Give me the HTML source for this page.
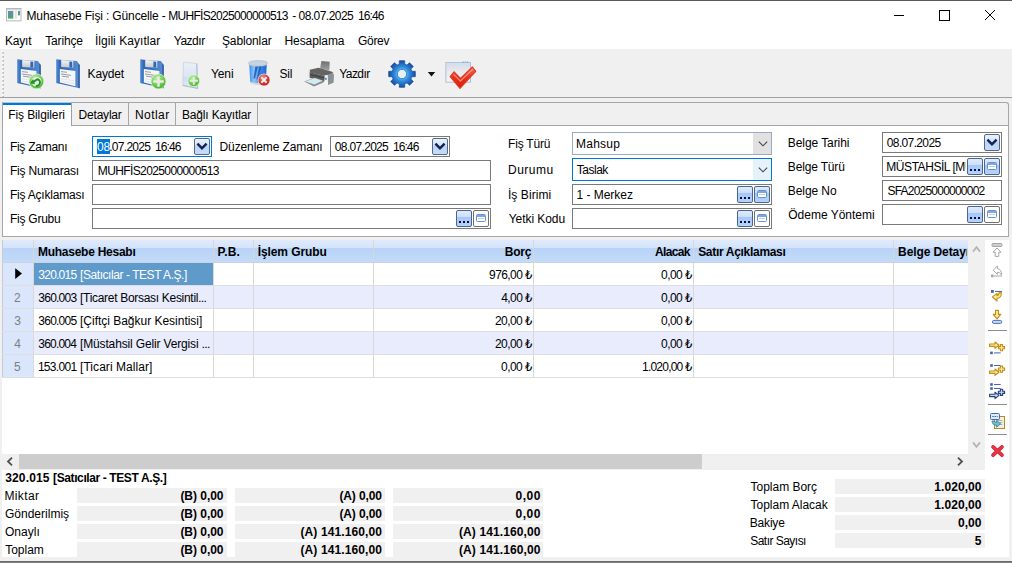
<!DOCTYPE html>
<html lang="tr">
<head>
<meta charset="utf-8">
<title>Muhasebe Fişi : Güncelle</title>
<style>
html,body{margin:0;padding:0;background:#f0f0f0;}
body{width:1012px;height:563px;overflow:hidden;font-family:"Liberation Sans","DejaVu Sans",sans-serif;font-size:12px;color:#000;}
#win{position:relative;width:1012px;height:563px;overflow:hidden;background:#f0f0f0;}
#win div,#win svg{position:absolute;box-sizing:border-box;}
.t{white-space:nowrap;line-height:14px;height:14px;font-size:12px;}
.b{font-weight:bold;}
.white{background:#fff;}
.fld{background:#fff;border:1px solid #7a7a7a;}
.fld.foc{border-color:#0078d7;}
.cmb{background:#fff;border:1px solid #97abc3;}
.cmb.foc{border-color:#0078d7;}
.ddb{border:1px solid #566884;border-radius:2px;background:linear-gradient(#e8f1fd 0%,#d6e6fb 42%,#b9d4f8 46%,#c6dcfa 100%);}
.eb{border:1px solid #4a6590;border-radius:2px;background:linear-gradient(#dfebfd 0%,#cfe0fa 36%,#a6c8f6 42%,#b6d3f9 100%);}
.eb2{border:1px solid #707070;border-radius:2px;background:#fff;}
.gbox{background:#f0f0f0;}
.hl{background:#0078d7;}
.vsep{background:#d8d8d8;width:1px;}
.hsep{background:#dedede;height:1px;}
.l{font-size:11.5px;}
.e{font-size:8.5px;font-weight:bold;}

</style>
</head>
<body>
<div id="win">
<!-- title bar -->
<div class="white" style="left:0;top:0;width:1012px;height:49px;border-top:1px solid #5a5a5a"></div>
<svg style="left:6px;top:8px" width="16" height="14" viewBox="0 0 16 14"><defs><linearGradient id="gApp" x1="0" y1="0" x2="0" y2="1"><stop offset="0" stop-color="#6888bc"/><stop offset="1" stop-color="#46aa5c"/></linearGradient></defs><rect x="0.5" y="0.5" width="14.5" height="12.4" fill="#fdfdfd" stroke="#b4b8bd"/><rect x="1" y="1" width="13.5" height="1.4" fill="#d4d8dc"/><rect x="1.9" y="3" width="5.4" height="7.6" fill="url(#gApp)"/><rect x="8.8" y="3" width="2" height="7.6" fill="#e2e2e2"/><rect x="12" y="3" width="2" height="4.4" fill="url(#gApp)"/></svg>
<svg style="left:890px;top:5px" width="110" height="20" viewBox="0 0 110 20" fill="none" stroke="#000" stroke-width="1"><path d="M4 10.5H14"/><rect x="49.5" y="5.5" width="10" height="10"/><path d="M95 5L105 15M105 5L95 15"/></svg>
<!-- toolbar -->
<div style="left:0;top:97px;width:1012px;height:1px;background:#a0a0a0"></div>
<!-- tab control -->
<div style="left:2px;top:102px;width:1007px;height:24px;border:1px solid #a6a6a6;border-bottom:none;border-radius:0 3px 0 0;background:#f0f0f0"></div>
<div class="white" style="left:2px;top:125px;width:1007px;height:112px;border:1px solid #a6a6a6"></div>
<div style="left:128px;top:103px;width:1px;height:22px;background:#a6a6a6"></div>
<div style="left:175px;top:103px;width:1px;height:22px;background:#a6a6a6"></div>
<div style="left:257px;top:103px;width:1px;height:22px;background:#a6a6a6"></div>
<div class="white" style="left:2px;top:102px;width:70px;height:24px;border:1px solid #a0a0a0;border-bottom:none;border-top:1px solid #b8c4d4;border-radius:2px 0 0 0"></div>
<div style="left:3px;top:103px;width:68px;height:2px;background:#0078d7"></div>
<!-- left fields -->
<div class="fld foc" style="left:92px;top:136px;width:120px;height:21px"></div>
<div class="hl" style="left:97px;top:139px;width:13px;height:15px"></div>
<div class="ddb" style="left:194px;top:138px;width:16px;height:17px"></div>
<div class="fld" style="left:330px;top:136px;width:120px;height:21px"></div>
<div class="ddb" style="left:432px;top:138px;width:16px;height:17px"></div>
<div class="fld" style="left:92px;top:160px;width:399px;height:21px"></div>
<div class="fld" style="left:92px;top:184px;width:399px;height:21px"></div>
<div class="fld" style="left:92px;top:208px;width:399px;height:21px"></div>
<!-- middle fields -->
<div class="cmb" style="left:572px;top:132px;width:200px;height:23px"></div>
<div style="left:753px;top:133px;width:18px;height:21px;background:#e1e1e1"></div>
<div class="cmb foc" style="left:572px;top:158px;width:200px;height:23px"></div>
<div style="left:753px;top:159px;width:18px;height:21px;background:#e5f1fb"></div>
<div class="fld" style="left:572px;top:184px;width:200px;height:21px"></div>
<div class="fld" style="left:572px;top:208px;width:200px;height:21px"></div>
<!-- right fields -->
<div class="fld" style="left:882px;top:132px;width:120px;height:21px"></div>
<div class="ddb" style="left:984px;top:134px;width:16px;height:17px"></div>
<div class="fld" style="left:882px;top:156px;width:120px;height:21px"></div>
<div class="fld" style="left:882px;top:180px;width:120px;height:21px"></div>
<div class="fld" style="left:882px;top:204px;width:120px;height:21px"></div>
<!-- grid -->
<div class="white" style="left:2px;top:240px;width:966px;height:214px"></div>
<div style="left:2px;top:240px;width:966px;height:23px;background:linear-gradient(#dfeafc 0,#d3e3fb 8px,#b8d3f7 8px,#c4dbf9 23px)"></div>
<div style="left:2px;top:263px;width:31px;height:115px;background:#d9e6fb"></div>
<div style="left:2px;top:240px;width:1px;height:138px;background:#c4ccd8"></div>
<div style="left:33px;top:285px;width:935px;height:23px;background:#e8ecfd"></div>
<div style="left:33px;top:331px;width:935px;height:23px;background:#e8ecfd"></div>
<div style="left:34px;top:263px;width:180px;height:22px;background:#5e9aca"></div>
<!-- scrollbars -->
<div style="left:968px;top:240px;width:17px;height:213px;background:#f0f0f0"></div>
<div style="left:2px;top:454px;width:983px;height:16px;background:#f0f0f0"></div>
<div style="left:19px;top:454px;width:683px;height:15px;background:#cdcdcd"></div>
<!-- footer -->
<div class="white" style="left:2px;top:470px;width:1007px;height:87px"></div>
<div class="gbox" style="left:77px;top:488px;width:150px;height:15px"></div>
<div class="gbox" style="left:235px;top:488px;width:150px;height:15px"></div>
<div class="gbox" style="left:393px;top:488px;width:150px;height:15px"></div>
<div class="gbox" style="left:77px;top:506px;width:150px;height:15px"></div>
<div class="gbox" style="left:235px;top:506px;width:150px;height:15px"></div>
<div class="gbox" style="left:393px;top:506px;width:150px;height:15px"></div>
<div class="gbox" style="left:77px;top:524px;width:150px;height:15px"></div>
<div class="gbox" style="left:235px;top:524px;width:150px;height:15px"></div>
<div class="gbox" style="left:393px;top:524px;width:150px;height:15px"></div>
<div class="gbox" style="left:77px;top:542px;width:150px;height:15px"></div>
<div class="gbox" style="left:235px;top:542px;width:150px;height:15px"></div>
<div class="gbox" style="left:393px;top:542px;width:150px;height:15px"></div>
<div class="gbox" style="left:835px;top:479px;width:150px;height:15px"></div>
<div class="gbox" style="left:835px;top:497px;width:150px;height:15px"></div>
<div class="gbox" style="left:835px;top:515px;width:150px;height:15px"></div>
<div class="gbox" style="left:835px;top:533px;width:150px;height:15px"></div>
<div class="vsep" style="left:33px;top:240px;height:138px"></div>
<div class="vsep" style="left:213px;top:240px;height:138px"></div>
<div class="vsep" style="left:253px;top:240px;height:138px"></div>
<div class="vsep" style="left:373px;top:240px;height:138px"></div>
<div class="vsep" style="left:533px;top:240px;height:138px"></div>
<div class="vsep" style="left:693px;top:240px;height:138px"></div>
<div class="vsep" style="left:893px;top:240px;height:138px"></div>
<div class="hsep" style="left:2px;top:262px;width:966px;background:#c9d3e0"></div>
<div class="hsep" style="left:2px;top:285px;width:966px"></div>
<div class="hsep" style="left:2px;top:308px;width:966px"></div>
<div class="hsep" style="left:2px;top:331px;width:966px"></div>
<div class="hsep" style="left:2px;top:354px;width:966px"></div>
<div class="hsep" style="left:2px;top:377px;width:966px"></div>
<svg style="left:0;top:0" width="0" height="0"><defs>
<linearGradient id="gFl" x1="0" y1="0" x2="1" y2="0"><stop offset="0" stop-color="#2e64b2"/><stop offset="0.5" stop-color="#3a72c0"/><stop offset="1" stop-color="#5a90d6"/></linearGradient>
<linearGradient id="gSh" x1="0" y1="0" x2="0" y2="1"><stop offset="0" stop-color="#f4f4f4"/><stop offset="1" stop-color="#c4c8cc"/></linearGradient>
<radialGradient id="gGr" cx="0.4" cy="0.3" r="0.8"><stop offset="0" stop-color="#c2eeac"/><stop offset="0.6" stop-color="#66ca46"/><stop offset="1" stop-color="#3aa62c"/></radialGradient>
<radialGradient id="gRd" cx="0.4" cy="0.3" r="0.8"><stop offset="0" stop-color="#f58a8a"/><stop offset="0.55" stop-color="#dd2f2f"/><stop offset="1" stop-color="#b01010"/></radialGradient>
<linearGradient id="gBin" x1="0" y1="0" x2="1" y2="0"><stop offset="0" stop-color="#3c8ee8"/><stop offset="0.28" stop-color="#8ccaf8"/><stop offset="0.6" stop-color="#3a8ae6"/><stop offset="1" stop-color="#2468d2"/></linearGradient>
<radialGradient id="gGear" cx="0.5" cy="0.5" r="0.5"><stop offset="0.3" stop-color="#5cc4f4"/><stop offset="0.55" stop-color="#2f8ade"/><stop offset="1" stop-color="#174c9e"/></radialGradient>
<linearGradient id="gChk" x1="0" y1="0" x2="0" y2="1"><stop offset="0" stop-color="#f4705a"/><stop offset="0.5" stop-color="#e8301c"/><stop offset="1" stop-color="#d81c0c"/></linearGradient>
<linearGradient id="gPr" x1="0" y1="0" x2="0" y2="1"><stop offset="0" stop-color="#707070"/><stop offset="1" stop-color="#a0a0a0"/></linearGradient>
<linearGradient id="gDoc" x1="0" y1="0" x2="0" y2="1"><stop offset="0" stop-color="#e9f0f8"/><stop offset="0.55" stop-color="#dbe6f3"/><stop offset="0.56" stop-color="#cfdcec"/><stop offset="1" stop-color="#e3ebf5"/></linearGradient>
<linearGradient id="gWin" x1="0" y1="0" x2="0" y2="1"><stop offset="0" stop-color="#d9dde3"/><stop offset="1" stop-color="#f6f7f9"/></linearGradient>
</defs></svg>
<svg style="left:1px;top:50.6px" width="4" height="47" viewBox="0 0 4 47"><rect x="0.4" y="0.2" width="1.6" height="1.6" fill="#fff"/><rect x="1.4" y="1" width="1.5" height="1.5" fill="#b0b0b0"/><rect x="0.4" y="4.2" width="1.6" height="1.6" fill="#fff"/><rect x="1.4" y="5" width="1.5" height="1.5" fill="#b0b0b0"/><rect x="0.4" y="8.2" width="1.6" height="1.6" fill="#fff"/><rect x="1.4" y="9" width="1.5" height="1.5" fill="#b0b0b0"/><rect x="0.4" y="12.2" width="1.6" height="1.6" fill="#fff"/><rect x="1.4" y="13" width="1.5" height="1.5" fill="#b0b0b0"/><rect x="0.4" y="16.2" width="1.6" height="1.6" fill="#fff"/><rect x="1.4" y="17" width="1.5" height="1.5" fill="#b0b0b0"/><rect x="0.4" y="20.2" width="1.6" height="1.6" fill="#fff"/><rect x="1.4" y="21" width="1.5" height="1.5" fill="#b0b0b0"/><rect x="0.4" y="24.2" width="1.6" height="1.6" fill="#fff"/><rect x="1.4" y="25" width="1.5" height="1.5" fill="#b0b0b0"/><rect x="0.4" y="28.2" width="1.6" height="1.6" fill="#fff"/><rect x="1.4" y="29" width="1.5" height="1.5" fill="#b0b0b0"/><rect x="0.4" y="32.2" width="1.6" height="1.6" fill="#fff"/><rect x="1.4" y="33" width="1.5" height="1.5" fill="#b0b0b0"/><rect x="0.4" y="36.2" width="1.6" height="1.6" fill="#fff"/><rect x="1.4" y="37" width="1.5" height="1.5" fill="#b0b0b0"/><rect x="0.4" y="40.2" width="1.6" height="1.6" fill="#fff"/><rect x="1.4" y="41" width="1.5" height="1.5" fill="#b0b0b0"/><rect x="0.4" y="44.2" width="1.6" height="1.6" fill="#fff"/><rect x="1.4" y="45" width="1.5" height="1.5" fill="#b0b0b0"/></svg>
<svg style="left:17px;top:58.8px" width="26" height="31" viewBox="0 0 26 31"><path d="M0.5 0.5 L20.9 2 L23.7 5.9 L23.7 29.3 L0.5 24 Z" fill="url(#gFl)"/><path d="M22.3 4.2 L23.7 5.9 L23.7 29.3 L22.3 29 Z" fill="#2c569c"/><path d="M0.5 0.5 L2.6 0.7 L2.6 24.5 L0.5 24 Z" fill="#4a8ad8" opacity="0.8"/><path d="M5.2 0.9 L17.3 1.8 L17.3 8.7 L5.2 8 Z" fill="url(#gSh)"/><path d="M13.4 2.6 L16.2 2.8 L16.2 8.6 L13.4 8.4 Z" fill="#3565ae"/><path d="M3.8 10.1 L19.4 11.9 L19.4 27.2 L3.8 23.6 Z" fill="#f4f6f8"/><path d="M5 12.6 L11 13.3 M5 15 L15 16.4 M6 17.2 L13 18.2" stroke="#8c9096" stroke-width="0.9" fill="none"/><path d="M5 19.8 L18 21.8 M5 22 L18 24.6" stroke="#dde1e6" stroke-width="0.8" fill="none"/></svg>
<svg style="left:28.2px;top:73.2px" width="16.8" height="16.8" viewBox="0 0 16.8 16.8"><circle cx="8.4" cy="8.4" r="7.4" fill="url(#gGr)" stroke="#e8f4e4" stroke-opacity="0.9" stroke-width="0.8"/><circle cx="8.6" cy="8.8" r="4.884" fill="#f2faee" opacity="0.92"/><path d="M7.8 12.8 A3.2 3.2 0 0 0 9.4 6.2 L5.4 8.8" stroke="#22902a" stroke-width="2" fill="none"/><path d="M2.1 10.3 L5 6 L7 11.2 Z" fill="#22902a"/></svg>
<svg style="left:55.8px;top:58.8px" width="26" height="31" viewBox="0 0 26 31"><path d="M0.5 0.5 L20.9 2 L23.7 5.9 L23.7 29.3 L0.5 24 Z" fill="url(#gFl)"/><path d="M22.3 4.2 L23.7 5.9 L23.7 29.3 L22.3 29 Z" fill="#2c569c"/><path d="M0.5 0.5 L2.6 0.7 L2.6 24.5 L0.5 24 Z" fill="#4a8ad8" opacity="0.8"/><path d="M5.2 0.9 L17.3 1.8 L17.3 8.7 L5.2 8 Z" fill="url(#gSh)"/><path d="M13.4 2.6 L16.2 2.8 L16.2 8.6 L13.4 8.4 Z" fill="#3565ae"/><path d="M3.8 10.1 L19.4 11.9 L19.4 27.2 L3.8 23.6 Z" fill="#f4f6f8"/><path d="M5 12.6 L11 13.3 M5 15 L15 16.4 M6 17.2 L13 18.2" stroke="#8c9096" stroke-width="0.9" fill="none"/><path d="M5 19.8 L18 21.8 M5 22 L18 24.6" stroke="#dde1e6" stroke-width="0.8" fill="none"/></svg>
<svg style="left:139.8px;top:58.8px" width="26" height="31" viewBox="0 0 26 31"><path d="M0.5 0.5 L20.9 2 L23.7 5.9 L23.7 29.3 L0.5 24 Z" fill="url(#gFl)"/><path d="M22.3 4.2 L23.7 5.9 L23.7 29.3 L22.3 29 Z" fill="#2c569c"/><path d="M0.5 0.5 L2.6 0.7 L2.6 24.5 L0.5 24 Z" fill="#4a8ad8" opacity="0.8"/><path d="M5.2 0.9 L17.3 1.8 L17.3 8.7 L5.2 8 Z" fill="url(#gSh)"/><path d="M13.4 2.6 L16.2 2.8 L16.2 8.6 L13.4 8.4 Z" fill="#3565ae"/><path d="M3.8 10.1 L19.4 11.9 L19.4 27.2 L3.8 23.6 Z" fill="#f4f6f8"/><path d="M5 12.6 L11 13.3 M5 15 L15 16.4 M6 17.2 L13 18.2" stroke="#8c9096" stroke-width="0.9" fill="none"/><path d="M5 19.8 L18 21.8 M5 22 L18 24.6" stroke="#dde1e6" stroke-width="0.8" fill="none"/></svg>
<svg style="left:150.4px;top:72.8px" width="17" height="17" viewBox="0 0 17 17"><circle cx="8.5" cy="8.5" r="7.5" fill="url(#gGr)" stroke="#e8f4e4" stroke-opacity="0.9" stroke-width="0.8"/><path d="M3.25 8.5 H13.75 M8.5 3.25 V13.75" stroke="#e9ebe9" stroke-width="2.4" fill="none"/></svg>
<svg style="left:181.6px;top:61.4px" width="18" height="29" viewBox="0 0 18 29"><path d="M1.6 1 L14.8 2.6 L15.6 27.4 L0.8 24.4 Z" fill="url(#gDoc)" stroke="#c3cfdd" stroke-width="0.7"/><path d="M14.8 2.6 L15.6 27.4 L0.8 24.4" fill="none" stroke="#a9bbd2" stroke-width="1"/></svg>
<svg style="left:186.9px;top:73.7px" width="13.6" height="13.6" viewBox="0 0 13.6 13.6"><circle cx="6.8" cy="6.8" r="5.8" fill="url(#gGr)" stroke="#e8f4e4" stroke-opacity="0.9" stroke-width="0.8"/><path d="M2.74 6.8 H10.86 M6.8 2.74 V10.86" stroke="#e9ebe9" stroke-width="1.856" fill="none"/></svg>
<svg style="left:247.9px;top:60.4px" width="20.5" height="27" viewBox="0 0 20.5 27"><path d="M1.2 3.4 L2.2 22.8 Q10 26 17.8 22.8 L18.8 3.4 Z" fill="url(#gBin)"/><path d="M7.4 6.4 L9.8 6.4 L7 18.4 L5.4 18.4 Z M11.6 6.4 L13.2 6.4 L9.8 19.6 L8.6 19.6 Z" fill="#1546b0" opacity="0.75"/><ellipse cx="10" cy="3.2" rx="9.2" ry="2.4" fill="#c4d6e4" stroke="#c6cbd0" stroke-width="1.4"/><path d="M2.3 22.2 Q10 25.8 17.7 22.2" stroke="#d4d8dc" stroke-width="1.8" fill="none"/></svg>
<svg style="left:257.2px;top:73.3px" width="14" height="14" viewBox="0 0 14 14"><circle cx="7" cy="7" r="6" fill="url(#gRd)" stroke="#e8f4e4" stroke-opacity="0.9" stroke-width="0.8"/><path d="M4.3 4.3 L9.7 9.7 M9.7 4.3 L4.3 9.7" stroke="#eee" stroke-width="2.16" fill="none"/></svg>
<svg style="left:304px;top:61px" width="31" height="26" viewBox="0 0 31 26"><path d="M17.4 0.1 L25.7 0.8 L25.4 9.4 L16.1 7.5 Z" fill="url(#gPr)"/><path d="M5.6 8.7 L14.5 6.8 L28 10.7 L29.4 12 L21.6 15 L5.6 11.4 Z" fill="#646464"/><path d="M3.3 9.6 L5.6 8.7 L5.6 16.8 L3.3 16.2 Z" fill="#ececec"/><path d="M5.6 11.3 L21.4 15 L20.4 20.8 L5.6 16.8 Z" fill="#5c5c5c"/><path d="M6.4 13 L20.4 16.2 L20.2 17.4 L6.4 14.2 Z" fill="#444"/><path d="M23.4 13.9 L28.9 11.9 Q30.2 13.4 30 15 L29.5 21.8 L24 23.9 Z" fill="#8c9292"/><path d="M20.6 14.6 L23.5 13.8 L24 23.8 L20.6 23.2 Z" fill="#f4f5f6"/><rect x="21.1" y="16.8" width="1.6" height="2" fill="#4a74d8"/><path d="M0.2 20.4 L10.7 16.7 L19.4 19.6 L19.4 21.6 L10 25.4 Z" fill="#8a8a8a"/><path d="M10.7 16.9 L18.6 19.7 L10.4 23.6 L1.2 20.5 Z" fill="#d2eaf1"/></svg>
<svg style="left:387.7px;top:60.2px" width="28" height="28" viewBox="0 0 28 28"><path d="M11.23 4.18 L11.35 0.66 L16.65 0.66 L16.77 4.18 L18.98 5.10 L21.56 2.69 L25.31 6.44 L22.90 9.02 L23.82 11.23 L27.34 11.35 L27.34 16.65 L23.82 16.77 L22.90 18.98 L25.31 21.56 L21.56 25.31 L18.98 22.90 L16.77 23.82 L16.65 27.34 L11.35 27.34 L11.23 23.82 L9.02 22.90 L6.44 25.31 L2.69 21.56 L5.10 18.98 L4.18 16.77 L0.66 16.65 L0.66 11.35 L4.18 11.23 L5.10 9.02 L2.69 6.44 L6.44 2.69 L9.02 5.10Z" fill="url(#gGear)" stroke="#1a4f9e" stroke-width="0.7" stroke-linejoin="round"/><circle cx="14" cy="14" r="4.7" fill="#e9eef2" stroke="#2a78c8" stroke-width="0.9"/></svg>
<svg style="left:427px;top:71px" width="9" height="6" viewBox="0 0 9 6"><path d="M0.8 1 L8.2 1 L4.5 5.4 Z" fill="#111"/></svg>
<svg style="left:444.5px;top:61px" width="32" height="29" viewBox="0 0 32 29"><rect x="0.9" y="1.6" width="24.6" height="19.6" fill="url(#gWin)" stroke="#aebfd8" stroke-width="1"/><rect x="1.4" y="2.1" width="23.6" height="2.6" fill="#d4dff0"/><path d="M17.5 1.2 H24" stroke="#8fa8cc" stroke-width="1.2" stroke-dasharray="1.4 0.8"/><path d="M5.2 15.7 L9.1 10.8 L15.5 17.4 L27.4 6 L30.7 10.3 L15 27.3 Z" fill="url(#gChk)" stroke="#e03a24" stroke-width="1.2" stroke-linejoin="round"/><path d="M8.6 13.4 L15.4 20 L28 8" stroke="#f9a898" stroke-width="1.3" fill="none" opacity="0.7"/></svg>
<svg style="left:194px;top:138px" width="16" height="17" viewBox="0 0 16 17"><path d="M3.4 5.6 L8 10.3 L12.6 5.6" stroke="#14224f" stroke-width="2.5" fill="none"/></svg>
<svg style="left:432px;top:138px" width="16" height="17" viewBox="0 0 16 17"><path d="M3.4 5.6 L8 10.3 L12.6 5.6" stroke="#14224f" stroke-width="2.5" fill="none"/></svg>
<svg style="left:984px;top:134px" width="16" height="17" viewBox="0 0 16 17"><path d="M3.4 5.6 L8 10.3 L12.6 5.6" stroke="#14224f" stroke-width="2.5" fill="none"/></svg>
<svg style="left:753px;top:132px" width="18" height="23" viewBox="0 0 18 23"><path d="M5.8 9.6 L10 13.8 L14.2 9.6" stroke="#444" stroke-width="1.1" fill="none"/></svg>
<svg style="left:753px;top:158px" width="18" height="23" viewBox="0 0 18 23"><path d="M5.8 9.6 L10 13.8 L14.2 9.6" stroke="#444" stroke-width="1.1" fill="none"/></svg>
<div class="eb" style="left:456px;top:210px;width:16px;height:17px"></div>
<svg style="left:456px;top:210px" width="16" height="17" viewBox="0 0 16 17"><rect x="3" y="11" width="2" height="2" fill="#0a0a4a"/><rect x="7" y="11" width="2" height="2" fill="#0a0a4a"/><rect x="11" y="11" width="2" height="2" fill="#0a0a4a"/></svg>
<div class="eb2" style="left:473px;top:210px;width:16px;height:17px"></div>
<svg style="left:473px;top:210px" width="16" height="17" viewBox="0 0 16 17"><rect x="3.5" y="4.5" width="9" height="7" rx="1" fill="#fff" stroke="#6492d8"/><rect x="4" y="5" width="8" height="2" fill="#7ea6e2"/><path d="M5.5 8.5H10.5" stroke="#9a9a9a" stroke-width="1" stroke-dasharray="1 1"/></svg>
<div class="eb" style="left:737px;top:186px;width:16px;height:17px"></div>
<svg style="left:737px;top:186px" width="16" height="17" viewBox="0 0 16 17"><rect x="3" y="11" width="2" height="2" fill="#0a0a4a"/><rect x="7" y="11" width="2" height="2" fill="#0a0a4a"/><rect x="11" y="11" width="2" height="2" fill="#0a0a4a"/></svg>
<div class="eb" style="left:754px;top:186px;width:16px;height:17px"></div>
<svg style="left:754px;top:186px" width="16" height="17" viewBox="0 0 16 17"><rect x="3.5" y="4.5" width="9" height="7" rx="1" fill="#fff" stroke="#6492d8"/><rect x="4" y="5" width="8" height="2" fill="#7ea6e2"/><path d="M5.5 8.5H10.5" stroke="#9a9a9a" stroke-width="1" stroke-dasharray="1 1"/></svg>
<div class="eb" style="left:737px;top:210px;width:16px;height:17px"></div>
<svg style="left:737px;top:210px" width="16" height="17" viewBox="0 0 16 17"><rect x="3" y="11" width="2" height="2" fill="#0a0a4a"/><rect x="7" y="11" width="2" height="2" fill="#0a0a4a"/><rect x="11" y="11" width="2" height="2" fill="#0a0a4a"/></svg>
<div class="eb2" style="left:754px;top:210px;width:16px;height:17px"></div>
<svg style="left:754px;top:210px" width="16" height="17" viewBox="0 0 16 17"><rect x="3.5" y="4.5" width="9" height="7" rx="1" fill="#fff" stroke="#6492d8"/><rect x="4" y="5" width="8" height="2" fill="#7ea6e2"/><path d="M5.5 8.5H10.5" stroke="#9a9a9a" stroke-width="1" stroke-dasharray="1 1"/></svg>
<div class="eb" style="left:967px;top:158px;width:16px;height:17px"></div>
<svg style="left:967px;top:158px" width="16" height="17" viewBox="0 0 16 17"><rect x="3" y="11" width="2" height="2" fill="#0a0a4a"/><rect x="7" y="11" width="2" height="2" fill="#0a0a4a"/><rect x="11" y="11" width="2" height="2" fill="#0a0a4a"/></svg>
<div class="eb" style="left:984px;top:158px;width:16px;height:17px"></div>
<svg style="left:984px;top:158px" width="16" height="17" viewBox="0 0 16 17"><rect x="3.5" y="4.5" width="9" height="7" rx="1" fill="#fff" stroke="#6492d8"/><rect x="4" y="5" width="8" height="2" fill="#7ea6e2"/><path d="M5.5 8.5H10.5" stroke="#9a9a9a" stroke-width="1" stroke-dasharray="1 1"/></svg>
<div class="eb" style="left:967px;top:206px;width:16px;height:17px"></div>
<svg style="left:967px;top:206px" width="16" height="17" viewBox="0 0 16 17"><rect x="3" y="11" width="2" height="2" fill="#0a0a4a"/><rect x="7" y="11" width="2" height="2" fill="#0a0a4a"/><rect x="11" y="11" width="2" height="2" fill="#0a0a4a"/></svg>
<div class="eb2" style="left:984px;top:206px;width:16px;height:17px"></div>
<svg style="left:984px;top:206px" width="16" height="17" viewBox="0 0 16 17"><rect x="3.5" y="4.5" width="9" height="7" rx="1" fill="#fff" stroke="#6492d8"/><rect x="4" y="5" width="8" height="2" fill="#7ea6e2"/><path d="M5.5 8.5H10.5" stroke="#9a9a9a" stroke-width="1" stroke-dasharray="1 1"/></svg>
<svg style="left:14px;top:267px" width="9" height="13" viewBox="0 0 9 13"><path d="M1.2 1.2 L8 6.6 L1.2 12 Z" fill="#000"/></svg>
<svg style="left:970px;top:244px" width="13" height="10" viewBox="0 0 13 10"><path d="M3 7.6 L6.5 3.2 L10 7.6" stroke="#b4b4b4" stroke-width="1.7" fill="none"/></svg>
<svg style="left:970px;top:440px" width="13" height="10" viewBox="0 0 13 10"><path d="M3 2.4 L6.5 6.8 L10 2.4" stroke="#b4b4b4" stroke-width="1.7" fill="none"/></svg>
<svg style="left:5px;top:456px" width="10" height="11" viewBox="0 0 10 11"><path d="M7 1.6 L3 5.5 L7 9.4" stroke="#505050" stroke-width="1.8" fill="none"/></svg>
<svg style="left:955px;top:456px" width="10" height="11" viewBox="0 0 10 11"><path d="M3 1.6 L7 5.5 L3 9.4" stroke="#505050" stroke-width="1.8" fill="none"/></svg>
<div style="left:985px;top:240px;width:24px;height:231px;background:#fff"></div>
<div style="left:988px;top:330px;width:19px;height:1px;background:#8e8e8e"></div>
<div style="left:988px;top:404px;width:19px;height:1px;background:#8e8e8e"></div>
<div style="left:988px;top:434px;width:19px;height:1px;background:#8e8e8e"></div>
<svg style="left:989px;top:242px" width="16" height="16" viewBox="0 0 16 16"><rect x="3" y="1.5" width="10" height="3" rx="1" fill="#cfcfcf" stroke="#a6a6a6" stroke-width="1"/><path d="M8 6 L12 10.2 L9.8 10.2 L9.8 14.4 L6.2 14.4 L6.2 10.2 L4 10.2 Z" fill="#fff" stroke="#a6a6a6" stroke-width="1"/></svg>
<svg style="left:989px;top:264px" width="16" height="16" viewBox="0 0 16 16"><path d="M4.2 6.2 L8.4 2 L8.4 4.6 Q12.6 5.4 12.6 11 L10.2 8.4 L8.4 8.4 L8.4 10.4 Z" fill="#fff" stroke="#a6a6a6" stroke-width="1" stroke-linejoin="round"/><rect x="2" y="10.6" width="2.6" height="2.6" fill="#a6a6a6"/><path d="M5 12 H13" stroke="#a6a6a6" stroke-width="1"/></svg>
<svg style="left:989px;top:289px" width="16" height="16" viewBox="0 0 16 16"><rect x="2" y="1" width="2.8" height="2.8" fill="#3f66b0"/><path d="M6 2.4 H13" stroke="#3f66b0" stroke-width="1"/><path d="M12.2 3.4 Q12.8 9 8 9.4 L8 12 L3.3 7.9 L8 4.4 L8 6.6 Q10 6.4 10 3.8 Z" fill="#fbe6a0" stroke="#c48e10" stroke-width="1.1" stroke-linejoin="round"/></svg>
<svg style="left:989px;top:308px" width="16" height="17" viewBox="0 0 16 17"><path d="M6.5 2.4 H9.5 V6.4 H11.8 L8 10.8 L4.2 6.4 H6.5 Z" fill="#fbe6a0" stroke="#c48e10" stroke-width="1.1" stroke-linejoin="round"/><rect x="3.4" y="12.4" width="9.4" height="3" rx="1.4" fill="#c8d8f0" stroke="#4a70bc" stroke-width="1"/></svg>
<svg style="left:989px;top:341px" width="17" height="18" viewBox="0 0 17 18"><rect x="1.2" y="10.6" width="2.6" height="2.6" fill="#3f66b0"/><path d="M5 11.9 H11.6" stroke="#3f66b0" stroke-width="1"/><path d="M0.6 3 H6 V1 L10 4.2 L6 7.4 V5.4 H0.6 Z" fill="#fbe6a0" stroke="#c48e10" stroke-width="1.1" stroke-linejoin="round"/><path d="M11.4 3.6 H13.6 V5.6 H15.6 V7.8 H13.6 V9.8 H11.4 V7.8 H9.4 V5.6 H11.4 Z" fill="#fbe6a0" stroke="#c48e10" stroke-width="1.1" stroke-linejoin="round"/></svg>
<svg style="left:989px;top:363px" width="17" height="18" viewBox="0 0 17 18"><rect x="1.2" y="1.2" width="2.6" height="2.6" fill="#3f66b0"/><path d="M5 2.5 H11.6" stroke="#3f66b0" stroke-width="1"/><path d="M0.6 8 H6 V6 L10 9.2 L6 12.4 V10.4 H0.6 Z" fill="#fbe6a0" stroke="#c48e10" stroke-width="1.1" stroke-linejoin="round"/><path d="M11.4 3 H13.6 V5 H15.6 V7.2 H13.6 V9.2 H11.4 V7.2 H9.4 V5 H11.4 Z" fill="#fbe6a0" stroke="#c48e10" stroke-width="1.1" stroke-linejoin="round"/></svg>
<svg style="left:989px;top:382px" width="17" height="18" viewBox="0 0 17 18"><rect x="1.2" y="1.2" width="2.6" height="2.6" fill="#3f66b0"/><path d="M5 2.5 H11.6" stroke="#3f66b0" stroke-width="1"/><rect x="1.2" y="5.2" width="2.6" height="2.6" fill="#3f66b0"/><path d="M5 6.5 H11.6" stroke="#3f66b0" stroke-width="1"/><path d="M0.6 12.2 H6 V10.2 L10 13.4 L6 16.6 V14.6 H0.6 Z" fill="#c8d4ee" stroke="#27407c" stroke-width="1.1" stroke-linejoin="round"/><path d="M11.4 7.2 H13.6 V9.2 H15.6 V11.4 H13.6 V13.4 H11.4 V11.4 H9.4 V9.2 H11.4 Z" fill="#c8d4ee" stroke="#27407c" stroke-width="1.1" stroke-linejoin="round"/></svg>
<svg style="left:989px;top:412px" width="17" height="18" viewBox="0 0 17 18"><rect x="5.5" y="4.5" width="10" height="12" fill="#f4f0dc" stroke="#b08a2c"/><path d="M7.5 8.5H13.5 M7.5 10.5H13.5 M7.5 12.5H13.5" stroke="#a0a0a0" stroke-width="0.8"/><rect x="1.5" y="1.5" width="9" height="6" rx="1" fill="#dfeaf8" stroke="#3f6cb4"/><path d="M3.4 4.5H8.6" stroke="#2a4a8a" stroke-width="1.2" stroke-dasharray="1.2 1"/><path d="M3 9 Q3.4 13.4 7.6 13.2 L7.6 15.2 L11.6 11.8 L7.6 8.6 L7.6 10.4 Q5.6 10.6 5.4 9 Z" fill="#6cc0d8" stroke="#2c7c98" stroke-width="0.8" stroke-linejoin="round"/></svg>
<svg style="left:990px;top:444px" width="15" height="14" viewBox="0 0 15 14"><path d="M3 2.9 L12 11.1 M12 2.9 L3 11.1" stroke="#c41828" stroke-width="3.6" stroke-linecap="round" fill="none"/><path d="M3 2.9 L12 11.1 M12 2.9 L3 11.1" stroke="#ea3444" stroke-width="2.4" stroke-linecap="round" fill="none"/></svg>
<div style="left:0;top:561px;width:1012px;height:2px;background:linear-gradient(#5f5f5f,#8a8a8a)"></div>

<!-- text labels -->
<div class="t" style="top:9px;left:26.52px;letter-spacing:-0.137px">Muhasebe Fişi : Güncelle -</div>
<div class="t" style="top:9px;left:168.22px;letter-spacing:-0.692px">MUHFİS2025000000513</div>
<div class="t" style="top:9px;left:292.37px;letter-spacing:-0.55px">- 08.07.2025</div>
<div class="t" style="top:9px;left:358.09px;letter-spacing:-0.947px">16:46</div>
<div class="t" style="top:34px;left:5.12px;letter-spacing:-0.247px">Kayıt</div>
<div class="t" style="top:34px;left:45.23px;letter-spacing:-0.147px">Tarihçe</div>
<div class="t" style="top:34px;left:94.89px;letter-spacing:0.044px">İlgili Kayıtlar</div>
<div class="t" style="top:34px;left:173.74px;letter-spacing:-0.467px">Yazdır</div>
<div class="t" style="top:34px;left:221.96px;letter-spacing:-0.12px">Şablonlar</div>
<div class="t" style="top:34px;left:284.52px;letter-spacing:-0.09px">Hesaplama</div>
<div class="t" style="top:34px;left:357.9px;letter-spacing:-0.261px">Görev</div>
<div class="t" style="top:67px;left:87.62px;letter-spacing:-0.157px">Kaydet</div>
<div class="t" style="top:67px;left:210.94px;letter-spacing:-0.083px">Yeni</div>
<div class="t" style="top:67px;left:279.46px;letter-spacing:-0.198px">Sil</div>
<div class="t" style="top:67px;left:339.24px;letter-spacing:-0.567px">Yazdır</div>
<div class="t" style="top:108px;left:8.22px;letter-spacing:-0.102px">Fiş Bilgileri</div>
<div class="t" style="top:108px;left:78.62px;letter-spacing:-0.215px">Detaylar</div>
<div class="t" style="top:108px;left:135.02px;letter-spacing:0.434px">Notlar</div>
<div class="t" style="top:108px;left:182.02px;letter-spacing:-0.169px">Bağlı Kayıtlar</div>
<div class="t" style="top:140px;left:9.92px;letter-spacing:-0.265px">Fiş Zamanı</div>
<div class="t" style="top:164px;left:9.92px;letter-spacing:-0.202px">Fiş Numarası</div>
<div class="t" style="top:188px;left:9.92px;letter-spacing:-0.21px">Fiş Açıklaması</div>
<div class="t" style="top:212px;left:9.92px;letter-spacing:-0.238px">Fiş Grubu</div>
<div class="t" style="top:140px;left:219.52px;letter-spacing:-0.106px">Düzenleme Zamanı</div>
<div class="t" style="top:140px;left:109.2px;letter-spacing:-0.703px">.07.2025</div>
<div class="t" style="top:140px;left:154.99px;letter-spacing:-0.897px">16:46</div>
<div class="t" style="top:140px;left:97.03px;letter-spacing:-0.069px;color:#fff">08</div>
<div class="t" style="top:140px;left:334.83px;letter-spacing:-0.677px">08.07.2025</div>
<div class="t" style="top:140px;left:392.89px;letter-spacing:-0.897px">16:46</div>
<div class="t" style="top:164px;left:97.82px;letter-spacing:-0.614px">MUHFİS2025000000513</div>
<div class="t" style="top:137px;left:508.02px;letter-spacing:-0.193px">Fiş Türü</div>
<div class="t" style="top:163px;left:508.02px;letter-spacing:0.499px">Durumu</div>
<div class="t" style="top:188px;left:507.89px;letter-spacing:0.093px">İş Birimi</div>
<div class="t" style="top:212px;left:508.74px;letter-spacing:-0.064px">Yetki Kodu</div>
<div class="t" style="top:137px;left:576.02px;letter-spacing:0.237px">Mahsup</div>
<div class="t" style="top:163px;left:576.73px;letter-spacing:-0.473px">Taslak</div>
<div class="t" style="top:188px;left:576.59px;letter-spacing:-0.042px">1 - Merkez</div>
<div class="t" style="top:135.5px;left:787.82px;letter-spacing:-0.081px">Belge Tarihi</div>
<div class="t" style="top:159.5px;left:787.82px;letter-spacing:-0.16px">Belge Türü</div>
<div class="t" style="top:183.5px;left:787.82px;letter-spacing:-0.084px">Belge No</div>
<div class="t" style="top:207.5px;left:788.23px;letter-spacing:-0.002px">Ödeme Yöntemi</div>
<div class="t" style="top:135.5px;left:886.83px;letter-spacing:-0.643px">08.07.2025</div>
<div class="t" style="top:159.5px;left:886.32px;letter-spacing:-0.45px;width:79.7px;overflow:hidden">MÜSTAHSİL [MÜSTAHSİL MAKBUZU]</div>
<div class="t" style="top:183.5px;left:887.46px;letter-spacing:-0.779px">SFA2025000000002</div>
<div class="t b" style="top:245px;left:37.9px;letter-spacing:-0.252px">Muhasebe Hesabı</div>
<div class="t b" style="top:245px;left:217.6px;letter-spacing:0.144px">P.B.</div>
<div class="t b" style="top:245px;left:257.7px;letter-spacing:-0.092px">İşlem Grubu</div>
<div class="t b" style="top:245px;right:480.61px;letter-spacing:-0.163px">Borç</div>
<div class="t b" style="top:245px;right:322.15px;letter-spacing:-0.643px">Alacak</div>
<div class="t b" style="top:245px;left:698.15px;letter-spacing:-0.307px">Satır Açıklaması</div>
<div class="t b" style="top:245px;left:898.1px;letter-spacing:-0.099px;width:69.1px;overflow:hidden">Belge Detayı</div>
<div class="t" style="top:268px;left:38.34px;letter-spacing:-0.772px;color:#fff">320.015</div>
<div class="t" style="top:268px;left:80.04px;letter-spacing:-0.438px;color:#fff">[Satıcılar - TEST A.Ş.]</div>
<div class="t" style="top:268px;right:480.29px;letter-spacing:-0.588px">976,00 <span class="l">₺</span></div>
<div class="t" style="top:268px;right:320.26px;letter-spacing:-0.553px">0,00 <span class="l">₺</span></div>
<div class="t" style="top:291px;left:38.34px;letter-spacing:-0.768px">360.003</div>
<div class="t" style="top:291px;left:80.04px;letter-spacing:-0.3px">[Ticaret Borsası Kesintil<span class="e">…</span></div>
<div class="t" style="top:291px;right:480.29px;letter-spacing:-0.592px">4,00 <span class="l">₺</span></div>
<div class="t" style="top:291px;right:320.26px;letter-spacing:-0.553px">0,00 <span class="l">₺</span></div>
<div class="t" style="top:291px;left:14px;letter-spacing:-0.28px;color:#7f7f7f">2</div>
<div class="t" style="top:314px;left:38.34px;letter-spacing:-0.772px">360.005</div>
<div class="t" style="top:314px;left:80.04px;letter-spacing:-0.017px">[Çiftçi Bağkur Kesintisi]</div>
<div class="t" style="top:314px;right:480.25px;letter-spacing:-0.55px">20,00 <span class="l">₺</span></div>
<div class="t" style="top:314px;right:320.26px;letter-spacing:-0.553px">0,00 <span class="l">₺</span></div>
<div class="t" style="top:314px;left:14.14px;letter-spacing:-0.503px;color:#7f7f7f">3</div>
<div class="t" style="top:337px;left:38.34px;letter-spacing:-0.797px">360.004</div>
<div class="t" style="top:337px;left:80.04px;letter-spacing:-0.151px">[Müstahsil Gelir Vergisi <span class="e">…</span></div>
<div class="t" style="top:337px;right:480.25px;letter-spacing:-0.55px">20,00 <span class="l">₺</span></div>
<div class="t" style="top:337px;right:320.26px;letter-spacing:-0.553px">0,00 <span class="l">₺</span></div>
<div class="t" style="top:337px;left:14.32px;letter-spacing:-0.861px;color:#7f7f7f">4</div>
<div class="t" style="top:360px;left:37.89px;letter-spacing:-0.682px">153.001</div>
<div class="t" style="top:360px;left:80.04px;letter-spacing:0.053px">[Ticari Mallar]</div>
<div class="t" style="top:360px;right:480.26px;letter-spacing:-0.553px">0,00 <span class="l">₺</span></div>
<div class="t" style="top:360px;right:320.5px;letter-spacing:-0.796px">1.020,00 <span class="l">₺</span></div>
<div class="t" style="top:360px;left:14.12px;letter-spacing:-0.503px;color:#7f7f7f">5</div>
<div class="t b" style="top:471px;left:5.22px;letter-spacing:0.153px">320.015</div>
<div class="t b" style="top:471px;left:53.08px;letter-spacing:-0.393px">[Satıcılar - TEST A.Ş.]</div>
<div class="t" style="top:489px;left:4.52px;letter-spacing:0.342px">Miktar</div>
<div class="t" style="top:507px;left:4.9px;letter-spacing:0.021px">Gönderilmiş</div>
<div class="t" style="top:525px;left:4.93px;letter-spacing:0.045px">Onaylı</div>
<div class="t" style="top:543px;left:5.23px;letter-spacing:-0.025px">Toplam</div>
<div class="t b" style="top:489px;right:788.55px;letter-spacing:-0.039px">(B) 0,00</div>
<div class="t b" style="top:489px;right:630.12px;letter-spacing:-0.11px">(A) 0,00</div>
<div class="t b" style="top:489px;right:470.97px;letter-spacing:0.536px">0,00</div>
<div class="t b" style="top:507px;right:788.55px;letter-spacing:-0.039px">(B) 0,00</div>
<div class="t b" style="top:507px;right:630.12px;letter-spacing:-0.11px">(A) 0,00</div>
<div class="t b" style="top:507px;right:470.97px;letter-spacing:0.536px">0,00</div>
<div class="t b" style="top:525px;right:788.55px;letter-spacing:-0.039px">(B) 0,00</div>
<div class="t b" style="top:525px;right:629.89px;letter-spacing:0.117px">(A) 141.160,00</div>
<div class="t b" style="top:525px;right:471.39px;letter-spacing:0.117px">(A) 141.160,00</div>
<div class="t b" style="top:543px;right:788.55px;letter-spacing:-0.039px">(B) 0,00</div>
<div class="t b" style="top:543px;right:629.89px;letter-spacing:0.117px">(A) 141.160,00</div>
<div class="t b" style="top:543px;right:471.39px;letter-spacing:0.117px">(A) 141.160,00</div>
<div class="t" style="top:480px;left:750.53px;letter-spacing:-0.012px">Toplam Borç</div>
<div class="t b" style="top:480px;right:30.43px;letter-spacing:0.076px">1.020,00</div>
<div class="t" style="top:498px;left:750.53px;letter-spacing:-0.01px">Toplam Alacak</div>
<div class="t b" style="top:498px;right:30.43px;letter-spacing:0.076px">1.020,00</div>
<div class="t" style="top:516px;left:749.82px;letter-spacing:-0.203px">Bakiye</div>
<div class="t b" style="top:516px;right:30.47px;letter-spacing:0.036px">0,00</div>
<div class="t" style="top:534px;left:750.26px;letter-spacing:-0.531px">Satır Sayısı</div>
<div class="t b" style="top:534px;right:31.15px;letter-spacing:-0.484px">5</div>
</div>
</body>
</html>
